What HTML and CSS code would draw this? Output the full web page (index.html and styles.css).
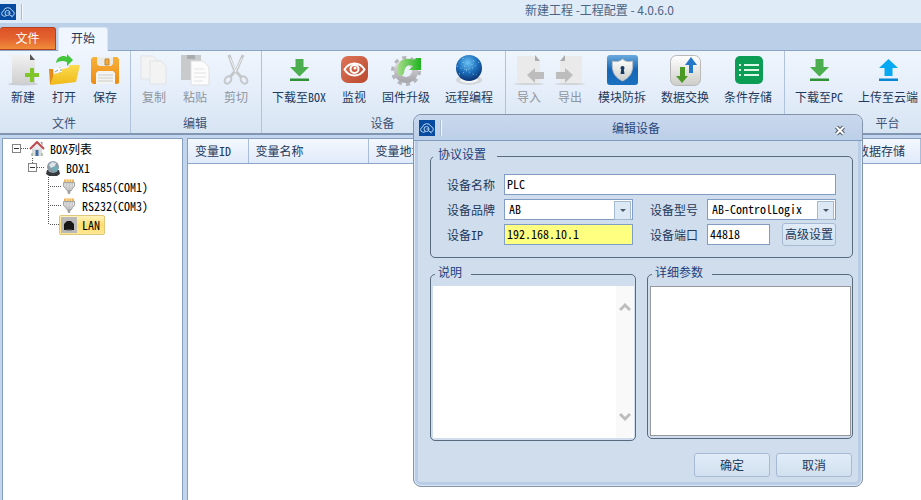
FILE: index.html
```html
<!DOCTYPE html>
<html lang="zh-CN">
<head>
<meta charset="utf-8">
<meta name="viewport" content="width=device-width, initial-scale=1">
<title>工程配置</title>
<link rel="stylesheet" href="styles.css">
</head>
<body>
<svg class="defs" aria-hidden="true">
  <defs>
    <linearGradient id="paper" x1="0" y1="0" x2="0" y2="1"><stop offset="0" stop-color="#f1f1f1"/><stop offset="1" stop-color="#cfcfcf"/></linearGradient>
    <linearGradient id="folder" x1="0" y1="0" x2="0" y2="1"><stop offset="0" stop-color="#fbdc50"/><stop offset="1" stop-color="#f0b918"/></linearGradient>
    <linearGradient id="disk" x1="0" y1="0" x2="0" y2="1"><stop offset="0" stop-color="#f8b13c"/><stop offset="1" stop-color="#ee8c12"/></linearGradient>
    <linearGradient id="red" x1="0" y1="0" x2="1" y2="1"><stop offset="0" stop-color="#df7558"/><stop offset="1" stop-color="#b9482f"/></linearGradient>
    <linearGradient id="blue" x1="0" y1="0" x2="0" y2="1"><stop offset="0" stop-color="#6aa9dc"/><stop offset=".5" stop-color="#1565b5"/><stop offset="1" stop-color="#1a70c0"/></linearGradient>
    <radialGradient id="globe" cx=".45" cy=".3" r=".75"><stop offset="0" stop-color="#6cc3f2"/><stop offset=".5" stop-color="#1c6fbd"/><stop offset="1" stop-color="#082a66"/></radialGradient>
    <linearGradient id="silver" x1="0" y1="0" x2="0" y2="1"><stop offset="0" stop-color="#ffffff"/><stop offset="1" stop-color="#cdcdc9"/></linearGradient>
    <linearGradient id="gear" x1="0" y1="0" x2="0" y2="1"><stop offset="0" stop-color="#dededf"/><stop offset="1" stop-color="#a9a9af"/></linearGradient>
    <linearGradient id="leaf" x1="0" y1="0" x2="1" y2="0"><stop offset="0" stop-color="#a8dc8c"/><stop offset="1" stop-color="#1fb41f"/></linearGradient>
    <symbol id="logo" viewBox="0 0 16 16">
      <rect width="16" height="16" fill="#074ba0"/>
      <g fill="none" stroke="#b9d4f0"><path d="M4.500 12H3.700a2.400 2.400 0 0 1-.3-4.700A4.500 4.500 0 0 1 12 6.500a2.900 2.900 0 0 1 .5 5.500H11"/><circle cx="7.500" cy="9" r="2.500"/><path d="M7.500 9h2.500M4.500 12.500l2-1M10 11l2.500 2"/></g>
    </symbol>
    <symbol id="plug" viewBox="0 0 16 16">
      <path d="M2.500 3.500h11v4l-2 2-1 2H6l-1.500-2-2-2z" fill="#c7c7c7" stroke="#a5a5a5"/><path d="M4 4.500v3M7 4.500v4M10 4.500v4M12.500 4.500v3" stroke="#e8e8e8"/><path d="M6 11h4l-1 4H7z" fill="#a3a3a3"/><path d="M3 .5h10V3H3z" fill="#f1b45c"/><path d="M5.500 0v3M8 0v3M10.500 0v3" stroke="#ffe3a4"/>
    </symbol>
    <symbol id="download" viewBox="0 0 32 32">
      <path d="M12.500 5h8v8H26l-9.500 9.500L7 13h5.500z" fill="#4cae4f"/><path d="M7 24.500h19V27H7z" fill="#2f9136"/>
    </symbol>
  </defs>
</svg>

<div class="app">
  <header class="titlebar">
    <svg class="logo"><use href="#logo"/></svg><span class="bar-mark"></span>
    <h1 class="app-title">新建工程 -工程配置 - 4.0.6.0</h1>
  </header>

  <nav class="tabs">
    <button class="tab tab-file" type="button">文件</button>
    <button class="tab tab-home" type="button">开始</button>
  </nav>

  <div class="ribbon">
    <section class="group">
      <div class="tools">
        <button class="tool" type="button"><svg viewBox="0 0 32 32"><ellipse cx="16" cy="30" rx="15" ry="1.500" fill="#c8cdd3"/><path d="M5 1h18l5 5v24H5z" fill="url(#paper)"/><path d="M23 0l5 6h-5z" fill="#555"/><path d="M18 19h5v-5h4v5h5v4h-5v5h-4v-5h-5z" fill="#80c62b"/></svg>新建</button>
        <button class="tool" type="button"><svg viewBox="0 0 32 32"><path d="M1 15h8l3-2 4 2v14l-14 1z" fill="#e38c19"/><path d="M5 14l12-1 3 8-14 4z" fill="#f5f7f9"/><path d="M7 18l3-2m1 3h6m-5-3h4" stroke="#7da0c0"/><path d="M14 15l6-1 2-3h10l-4 17-26 3 4-11 8-2z" fill="url(#folder)"/><path d="M8 9c1-7 8-8 11-6V0l6 6-6 6V8c-4-2-8-1-11 1z" fill="#43c63b"/></svg>打开</button>
        <button class="tool" type="button"><svg viewBox="0 0 32 32"><path d="M4 3h24l2 2v24l-2 1H4l-2-2V5z" fill="url(#disk)"/><path d="M8 3h16v7l-2 2H10l-2-2z" fill="#eceae4"/><path d="M16 5h4v6h-4z" fill="#f7a933" stroke="#b98a40"/><path d="M7 19l2-2h15l2 2v11H7z" fill="#f3f3f1"/><path d="M9 21h15M9 24h15M9 27h15" stroke="#ccc"/></svg>保存</button>
      </div>
      <h2 class="group-name">文件</h2>
    </section>
    <section class="group">
      <div class="tools">
        <button class="tool" type="button" disabled><svg viewBox="0 0 32 32"><g fill="#f3f3f3" stroke="#e1e3e5"><path d="M3 2h12l5 5v18H3z"/><path d="M12 7h11l5 5v18H12z"/></g></svg>复制</button>
        <button class="tool" type="button" disabled><svg viewBox="0 0 32 32"><path d="M2 1h20v25H2z" fill="#c9cacb"/><path d="M8 1h8v4H8z" fill="#a9acaf"/><path d="M12 7h12l6 6v18H12z" fill="#fcfcfc" stroke="#dedfe1"/><path d="M15 15h10M15 19h12M15 23h12M15 27h9" stroke="#e3e4e6"/></svg>粘贴</button>
        <button class="tool" type="button" disabled><svg viewBox="0 0 32 32"><g fill="none" stroke="#c5c8cb" stroke-width="2"><path d="M9 1l5 14 7 8M23 1l-6 14-7 8" stroke-width="3"/><ellipse cx="8" cy="26" rx="3" ry="4" transform="rotate(35 8 26)"/><ellipse cx="24" cy="26" rx="3" ry="4" transform="rotate(-35 24 26)"/></g><path d="M10 4l6 14M22 4l-7 14" stroke="#eef0f1"/></svg>剪切</button>
      </div>
      <h2 class="group-name">编辑</h2>
    </section>
    <section class="group">
      <div class="tools">
        <button class="tool" type="button"><svg><use href="#download"/></svg>下载至BOX</button>
        <button class="tool" type="button"><svg viewBox="0 0 32 32"><rect x="3" y="2" width="27" height="27" rx="7" fill="url(#red)"/><path d="M6.500 15.500c5-8 15-8 20 0-5 8-15 8-20 0z" fill="none" stroke="#fff" stroke-width="2"/><circle cx="16.500" cy="15" r="4" fill="none" stroke="#fff" stroke-width="2"/><circle cx="17" cy="14" r="1.500" fill="#fff"/></svg>监视</button>
        <button class="tool" type="button"><svg viewBox="0 0 32 32"><circle cx="16" cy="17" r="13" fill="none" stroke="#b4b4ba" stroke-width="4" stroke-dasharray="4 4.168"/><circle cx="16" cy="17" r="9" fill="none" stroke="url(#gear)" stroke-width="6"/><path d="M8 20C5 9 13 2 24 6l2-2h5v12H19l4-4c-5-2-8 0-9 7-1 3-5 4-6 1z" fill="url(#leaf)"/></svg>固件升级</button>
        <button class="tool" type="button"><svg viewBox="0 0 32 32"><ellipse cx="16" cy="26" rx="13" ry="5" fill="#d3d7dc"/><ellipse cx="16" cy="26" rx="9" ry="3" fill="#f4f5f6"/><circle cx="16" cy="14" r="13" fill="url(#globe)"/><g fill="none" stroke="#8ecbf0" stroke-dasharray="1 3"><path d="M4 12c8 6 16 4 22-4M10 4c-1 8 5 16 14 17M6 20c8-1 14-8 15-16"/></g></svg>远程编程</button>
      </div>
      <h2 class="group-name">设备</h2>
    </section>
    <section class="group">
      <div class="tools">
        <button class="tool" type="button" disabled><svg viewBox="0 0 32 32"><path d="M4 2h18l5 5v23H4z" fill="#eaeaea"/><path d="M22 1l5 6h-5z" fill="#acacac"/><ellipse cx="16" cy="30" rx="15" ry="1" fill="#d2d5d8"/><path d="M14 21l8-7v4h9v7h-9v4z" fill="#bdbdbd"/></svg>导入</button>
        <button class="tool" type="button" disabled><svg viewBox="0 0 32 32"><path d="M11 2h17v28H6V7z" fill="#eaeaea"/><path d="M11 1v6H6z" fill="#acacac"/><ellipse cx="16" cy="30" rx="15" ry="1" fill="#d2d5d8"/><path d="M19 21l-8-7v4H2v7h9v4z" fill="#bdbdbd"/></svg>导出</button>
        <button class="tool" type="button"><svg viewBox="0 0 32 32"><rect x="1" y="1" width="31" height="30" rx="3" fill="url(#blue)"/><path d="M16.500 5c3 3 7 3 10 2 1 9-1 16-10 20-9-4-11-11-10-20 3 1 7 1 10-2z" fill="url(#silver)" stroke="#b5bbc4"/><circle cx="16.500" cy="14" r="2" fill="#163a66"/><path d="M15.500 14h2l1 6h-4z" fill="#163a66"/></svg>模块防拆</button>
        <button class="tool" type="button"><svg viewBox="0 0 32 32"><rect x="1.500" y="1.500" width="30" height="30" rx="6" fill="url(#silver)" stroke="#b8b8b8"/><path d="M11 13h5v9h3l-6 7-6-7h4z" fill="#4b9a24"/><path d="M20 19V11h-4l6-8 6 8h-4v8z" fill="#2378c9"/></svg>数据交换</button>
        <button class="tool" type="button"><svg viewBox="0 0 32 32"><rect x="3" y="2" width="28" height="28" rx="5" fill="#0b9d54"/><path d="M12 11h15M12 16h15M12 21h15" stroke="#d9f7e6" stroke-width="2"/><path d="M7 11h2M7 16h2M7 21h2" stroke="#d9f7e6" stroke-width="2"/></svg>条件存储</button>
      </div>
      <h2 class="group-name"></h2>
    </section>
    <section class="group group-platform">
      <div class="tools">
        <button class="tool" type="button"><svg><use href="#download"/></svg>下载至PC</button>
        <button class="tool" type="button"><svg viewBox="0 0 32 32"><path d="M16.500 5l9.500 9h-5.500v8h-8v-8H7z" fill="#07a8f4"/><path d="M7 24.500h19V27H7z" fill="#0786d2"/></svg>上传至云端</button>
      </div>
      <h2 class="group-name">平台</h2>
    </section>
  </div>

  <main class="workspace">
    <aside class="tree-panel">
      <ul class="tree">
        <li>
          <div class="node"><button class="toggle" type="button" aria-label="−"></button><span class="stub"></span><svg class="node-icon" viewBox="0 0 16 16"><path d="M3 8h10v7H3z" fill="#d9dde0"/><path d="M1 8l7-7 7 7" fill="#e9eaec" stroke="#bf4a4d" stroke-width="2"/><path d="M11.500 1h2v4" fill="#8c8f96"/><path d="M6.500 9h3v6h-3z" fill="#456d9c"/><path d="M3 12v3M13 12v3" stroke="#7d9b62"/></svg>BOX列表</div>
          <ul class="branch branch-box">
            <li>
              <div class="node"><button class="toggle" type="button" aria-label="−"></button><span class="stub"></span><svg class="node-icon" viewBox="0 0 16 16"><path d="M2 10h12l1 4-3 2H4l-3-2z" fill="#36393d"/><circle cx="8" cy="7" r="6" fill="#8d9ba6"/><path d="M4 5l3-3 4 1-1 3-4 2z" fill="#dce6ea"/><path d="M7 8l4-2 2 4-4 2z" fill="#6fb0b8"/></svg>BOX1</div>
              <ul class="branch branch-ports">
                <li class="node"><span class="stub"></span><svg class="node-icon"><use href="#plug"/></svg>RS485(COM1)</li>
                <li class="node"><span class="stub"></span><svg class="node-icon"><use href="#plug"/></svg>RS232(COM3)</li>
                <li class="node"><span class="stub"></span><span class="selected"><svg class="node-icon" viewBox="0 0 16 16"><rect width="16" height="16" fill="#b9b9b9"/><path d="M3 13V7l3-3h4l3 3v6z" fill="#171717"/><path d="M5 13h6" stroke="#666"/></svg>LAN</span></li>
              </ul>
            </li>
          </ul>
        </li>
      </ul>
    </aside>
    <section class="grid-panel">
      <table class="vars">
        <thead><tr><th class="col-id">变量ID</th><th class="col-std">变量名称</th><th class="col-std">变量地址</th><th></th><th class="col-store">数据存储</th></tr></thead>
      </table>
    </section>
  </main>
</div>

<form class="dialog" role="dialog" aria-labelledby="dlg-title">
  <header class="dialog-bar">
    <svg class="logo"><use href="#logo"/></svg><span class="bar-mark"></span>
    <h2 class="dialog-title" id="dlg-title">编辑设备</h2>
    <button class="close" type="button" aria-label="×"><svg viewBox="0 0 12 11"><path d="M2.500 2l7 7M9.500 2l-7 7" stroke="#4e5a6b" stroke-width="4"/><path d="M2.500 2l7 7M9.500 2l-7 7" stroke="#fff" stroke-width="2"/></svg></button>
  </header>
  <div class="dialog-body">
    <fieldset class="box">
      <legend>协议设置</legend>
      <div class="fields">
        <label for="name">设备名称</label>
        <input class="wide" id="name" type="text" value="PLC">
        <label for="brand">设备品牌</label>
        <span class="combo"><select id="brand"><option>AB</option></select></span>
        <label class="second" for="model">设备型号</label>
        <span class="combo"><select id="model"><option>AB-ControlLogix</option></select></span>
        <label for="ip">设备IP</label>
        <input class="warn" id="ip" type="text" value="192.168.10.1">
        <label class="second" for="port">设备端口</label>
        <span class="port"><input id="port" type="text" value="44818"><button class="btn btn-small" type="button">高级设置</button></span>
      </div>
    </fieldset>
    <div class="pair">
      <fieldset class="box box-note">
        <legend><label for="note">说明</label></legend>
        <div class="note">
          <textarea id="note" readonly></textarea>
          <div class="scroll"><svg viewBox="0 0 12 10"><path d="M1 8l5-5 5 5" fill="none" stroke="#bdbdbd" stroke-width="3"/></svg><svg viewBox="0 0 12 10"><path d="M1 2l5 5 5-5" fill="none" stroke="#bdbdbd" stroke-width="3"/></svg></div>
        </div>
      </fieldset>
      <fieldset class="box box-params">
        <legend><label for="params">详细参数</label></legend>
        <textarea class="params" id="params"></textarea>
      </fieldset>
    </div>
    <footer class="actions">
      <button class="btn" type="button">确定</button>
      <button class="btn" type="button">取消</button>
    </footer>
  </div>
</form>
</body>
</html>
```
FILE: styles.css
```css
* { box-sizing: border-box; }

body {
  margin: 0;
  overflow: hidden;
  background: #c3d5ec;
  color: #1e395b;
  font: 12px/16px "Noto Sans CJK SC", sans-serif;
  font-feature-settings: "hwid";
}

button, input, select, textarea { font: inherit; font-feature-settings: inherit; color: inherit; }
button { padding: 0; border: 0; background: none; }
h1, h2 { margin: 0; font-size: 12px; font-weight: 400; }
ul { list-style: none; margin: 0; padding: 0; }
.defs { position: absolute; width: 0; height: 0; }
.app { display: flex; flex-direction: column; height: 100vh; }

/* Title bar and tabs */
.titlebar { display: flex; align-items: center; height: 23px; background: #dfebf7; }
.logo { flex: none; width: 16px; height: 16px; }
.bar-mark { flex: none; width: 2px; height: 16px; margin-left: 5px; background: #a9bbd6; border-right: 1px solid #f4f8fd; }
.app-title { flex: 1; padding: 0 0 4px 255px; text-align: center; font-feature-settings: normal; color: #4b6484; }
.tabs { display: flex; align-items: flex-end; gap: 2px; height: 28px; background: #bbcfe8; border-bottom: 1px solid #8aa5c6; }
.tab { height: 23px; padding-bottom: 2px; border-radius: 3px 3px 0 0; }
.tab-file { width: 56px; color: #fff; border: 1px solid #b5401f; border-left: 0; background: linear-gradient(#dd5226, #e4632f 50%, #f18d3a); }
.tab-home { width: 50px; height: 24px; margin-bottom: -1px; padding-bottom: 4px; border: 1px solid #d7e5f5; border-bottom: 0; background: #f0f6fd; color: #1e395b; }

/* Ribbon */
.ribbon { display: flex; height: 84px; overflow: hidden; background: linear-gradient(#eff5fd, #e2ecf9 60%, #d7e4f2); border-bottom: 2px solid #8097b4; }
.group { flex: none; padding: 3px 5px 0 3px; border-right: 1px solid #b1c3da; display: flex; flex-direction: column; justify-content: space-between; }
.group-platform { width: 208px; }
.tools { display: flex; gap: 1px; }
.tool { display: flex; flex-direction: column; align-items: center; min-width: 40px; padding: 0 7px; gap: 3px; white-space: nowrap; }
.tool svg { width: 32px; height: 32px; margin: 0 -4px; }
.tool:disabled { color: #8f959c; }
.group-name { text-align: center; color: #3b5277; line-height: 20px; }

/* Workspace */
.workspace { flex: 1; display: flex; gap: 4px; padding: 3px 0 0 2px; min-height: 0; }
.tree-panel { width: 181px; background: #fff; border: 1px solid #86a0c4; border-bottom: 0; color: #000; }
.grid-panel { flex: 1; background: #fff; border: 1px solid #86a0c4; border-width: 1px 0 0 1px; }

.tree { padding: 0 0 0 9px; }
.node { display: flex; align-items: center; height: 19px; }
.toggle { width: 9px; height: 9px; border: 1px solid #848484; background: linear-gradient(#333, #333) center / 5px 1px no-repeat #fff; }
.stub { width: 8px; height: 1px; background: repeating-linear-gradient(90deg, #555 0 1px, transparent 1px 2px); }
.node-icon { width: 16px; height: 16px; margin-right: 5px; }
.branch { position: relative; }
.branch-box { padding-left: 16px; }
.branch-ports { padding-left: 22px; }
.branch::before { content: ""; position: absolute; top: 0; width: 1px; background: repeating-linear-gradient(#555 0 1px, transparent 1px 2px); }
.branch-box::before { left: 20px; height: 5px; }
.branch-ports::before { left: 20px; height: 48px; }
.branch-ports .stub { width: 11px; }
.selected { display: flex; align-items: center; height: 20px; margin-left: -2px; padding: 0 4px 0 1px; border: 1px solid #e0c67a; border-radius: 2px; background: linear-gradient(#fff3bd, #ffdf70 50%, #ffe793); }

.vars { width: 100%; table-layout: fixed; border-collapse: collapse; }
.vars th { height: 24px; padding: 0 0 0 7px; text-align: left; font-weight: 400; white-space: nowrap; background: linear-gradient(#f4f8fe, #e0eafa); border-bottom: 1px solid #8aa5c6; border-right: 1px solid #a9bdd8; }
.col-id { width: 60px; }
.col-std { width: 120px; }
.col-store { width: 71px; }

/* Dialog */
.dialog { position: absolute; left: 413px; top: 114px; width: 450px; border: 1px solid #8294ab; border-radius: 8px; background: #d0dded; box-shadow: inset 0 0 0 1px #dce8f6, inset 0 0 0 4px #bacde7; }
.dialog-bar { display: flex; align-items: center; height: 26px; padding: 0 16px 0 5px; border-bottom: 1px solid #7f9cbd; border-radius: 8px 8px 0 0; background: linear-gradient(#c9d8ed, #bccfe8); }
.dialog-title { flex: 1; padding-right: 4px; text-align: center; color: #29487d; }
.close { width: 12px; height: 18px; padding-top: 5px; }
.close svg { display: block; width: 12px; height: 11px; }
.dialog-body { padding: 6px 9px 9px 16px; }

.box { min-width: 0; margin: 0; padding: 0; border: 1px solid #596b7f; border-radius: 5px; }
.box legend { margin-left: 2px; padding: 0 11px 4px 5px; line-height: 14px; color: #213f7c; }
.fields { display: grid; grid-template-columns: 57px 129px 74px 129px; row-gap: 4px; padding: 9px 16px 12px; }
.fields label { line-height: 21px; }
.fields .second { padding-left: 17px; }
.wide { grid-column: 2 / -1; }
.fields input, .fields select { width: 100%; min-width: 0; height: 21px; margin: 0; padding: 0 2px 2px; border: 1px solid #819dc3; border-radius: 0; background: #fff; color: #000; outline: 0; }
.fields .warn { background: #ffff80; }
.combo { position: relative; }
.combo select { display: block; appearance: none; padding-left: 4px; }
.combo::before { content: ""; position: absolute; right: 2px; top: 2px; width: 15px; height: 17px; border: 1px solid #a4b9d2; background: #dce8f4; pointer-events: none; }
.combo::after { content: ""; position: absolute; right: 7px; top: 10px; border: 3px solid transparent; border-top-color: #4b5867; border-bottom: 0; pointer-events: none; }
.port { display: flex; gap: 12px; }
.fields .port input { width: 63px; }

.btn { width: 76px; height: 24px; border: 1px solid #a7bad3; border-radius: 3px; background: linear-gradient(#e1ecf8, #d1e0ef); white-space: nowrap; }
.btn-small { flex: 1; width: auto; height: 23px; margin: -1px 0; padding-bottom: 2px; }

.pair { display: flex; align-items: flex-start; gap: 11px; margin-top: 7px; }
.pair legend { padding: 0 9px 4px 3px; }
.box-note, .box-params { flex: 1; padding: 3px 1px 2px 2px; }
.note { display: flex; height: 152px; background: #fff; }
.pair textarea { display: block; width: 100%; margin: 0; resize: none; border: 0; outline: 0; background: #fff; }
.scroll { flex: none; display: flex; flex-direction: column; justify-content: space-between; width: 18px; padding: 16px 3px; background: #f9f9f9; }
.scroll svg { width: 12px; height: 10px; }
.pair .params { height: 150px; border: 1px solid #969a9e; }
.actions { display: flex; justify-content: flex-end; gap: 6px; margin: 12px 1px 0 0; }
```
